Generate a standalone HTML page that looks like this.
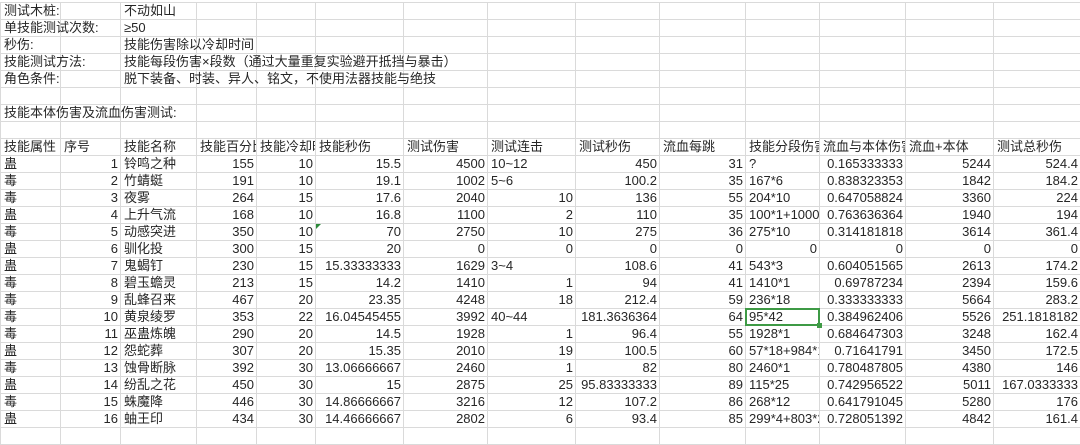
<!DOCTYPE html>
<html><head><meta charset="utf-8"><style>
html,body{margin:0;padding:0;background:#fff;width:1080px;height:428px;overflow:hidden}
table{position:absolute;left:0;top:2px;width:1080px;border-collapse:collapse;table-layout:fixed;font-family:"Liberation Sans","Noto Sans CJK SC",sans-serif;font-size:13px;color:#262626}
td{border:1px solid #dadada;height:16px;padding:0 2px 0 3px;white-space:nowrap;overflow:hidden;line-height:16px;max-width:0}
td.v{overflow:visible}
.r{text-align:right}
.sel{position:relative;overflow:visible}
.sel:after{content:"";position:absolute;left:-1px;top:-1px;right:-1px;bottom:-1px;border:2px solid #3e9a45}
.sel:before{content:"";position:absolute;right:-3px;bottom:-3px;width:5px;height:5px;background:#3e9a45;z-index:2}
.tri{position:relative;overflow:visible}
.tri:after{content:"";position:absolute;left:0;top:0;border-top:5px solid #2c8a3a;border-right:5px solid transparent}
</style></head><body>
<table>
<colgroup><col style="width:60px"><col style="width:60px"><col style="width:76px"><col style="width:60px"><col style="width:59px"><col style="width:88px"><col style="width:84px"><col style="width:88px"><col style="width:84px"><col style="width:86px"><col style="width:74px"><col style="width:86px"><col style="width:88px"><col style="width:87px"></colgroup>
<tr><td class="v">测试木桩:</td><td></td><td class="v">不动如山</td><td></td><td></td><td></td><td></td><td></td><td></td><td></td><td></td><td></td><td></td><td></td></tr>
<tr><td class="v">单技能测试次数:</td><td></td><td class="v">≥50</td><td></td><td></td><td></td><td></td><td></td><td></td><td></td><td></td><td></td><td></td><td></td></tr>
<tr><td class="v">秒伤:</td><td></td><td class="v">技能伤害除以冷却时间</td><td></td><td></td><td></td><td></td><td></td><td></td><td></td><td></td><td></td><td></td><td></td></tr>
<tr><td class="v">技能测试方法:</td><td></td><td class="v">技能每段伤害×段数（通过大量重复实验避开抵挡与暴击）</td><td></td><td></td><td></td><td></td><td></td><td></td><td></td><td></td><td></td><td></td><td></td></tr>
<tr><td class="v">角色条件:</td><td></td><td class="v">脱下装备、时装、异人、铭文，不使用法器技能与绝技</td><td></td><td></td><td></td><td></td><td></td><td></td><td></td><td></td><td></td><td></td><td></td></tr>
<tr><td></td><td></td><td></td><td></td><td></td><td></td><td></td><td></td><td></td><td></td><td></td><td></td><td></td><td></td></tr>
<tr><td class="v">技能本体伤害及流血伤害测试:</td><td></td><td></td><td></td><td></td><td></td><td></td><td></td><td></td><td></td><td></td><td></td><td></td><td></td></tr>
<tr><td></td><td></td><td></td><td></td><td></td><td></td><td></td><td></td><td></td><td></td><td></td><td></td><td></td><td></td></tr>
<tr><td>技能属性</td><td>序号</td><td>技能名称</td><td>技能百分比</td><td>技能冷却时间</td><td>技能秒伤</td><td>测试伤害</td><td>测试连击</td><td>测试秒伤</td><td>流血每跳</td><td>技能分段伤害</td><td>流血与本体伤害比</td><td>流血+本体</td><td>测试总秒伤</td></tr>
<tr><td>蛊</td><td class="r">1</td><td>铃鸣之种</td><td class="r">155</td><td class="r">10</td><td class="r">15.5</td><td class="r">4500</td><td>10~12</td><td class="r">450</td><td class="r">31</td><td>?</td><td class="r">0.165333333</td><td class="r">5244</td><td class="r">524.4</td></tr>
<tr><td>毒</td><td class="r">2</td><td>竹蜻蜓</td><td class="r">191</td><td class="r">10</td><td class="r">19.1</td><td class="r">1002</td><td>5~6</td><td class="r">100.2</td><td class="r">35</td><td>167*6</td><td class="r">0.838323353</td><td class="r">1842</td><td class="r">184.2</td></tr>
<tr><td>毒</td><td class="r">3</td><td>夜雾</td><td class="r">264</td><td class="r">15</td><td class="r">17.6</td><td class="r">2040</td><td class="r">10</td><td class="r">136</td><td class="r">55</td><td>204*10</td><td class="r">0.647058824</td><td class="r">3360</td><td class="r">224</td></tr>
<tr><td>蛊</td><td class="r">4</td><td>上升气流</td><td class="r">168</td><td class="r">10</td><td class="r">16.8</td><td class="r">1100</td><td class="r">2</td><td class="r">110</td><td class="r">35</td><td>100*1+1000*</td><td class="r">0.763636364</td><td class="r">1940</td><td class="r">194</td></tr>
<tr><td>毒</td><td class="r">5</td><td>动感突进</td><td class="r">350</td><td class="r">10</td><td class="r tri">70</td><td class="r">2750</td><td class="r">10</td><td class="r">275</td><td class="r">36</td><td>275*10</td><td class="r">0.314181818</td><td class="r">3614</td><td class="r">361.4</td></tr>
<tr><td>蛊</td><td class="r">6</td><td>驯化投</td><td class="r">300</td><td class="r">15</td><td class="r">20</td><td class="r">0</td><td class="r">0</td><td class="r">0</td><td class="r">0</td><td class="r">0</td><td class="r">0</td><td class="r">0</td><td class="r">0</td></tr>
<tr><td>蛊</td><td class="r">7</td><td>鬼蝎钉</td><td class="r">230</td><td class="r">15</td><td class="r">15.33333333</td><td class="r">1629</td><td>3~4</td><td class="r">108.6</td><td class="r">41</td><td>543*3</td><td class="r">0.604051565</td><td class="r">2613</td><td class="r">174.2</td></tr>
<tr><td>毒</td><td class="r">8</td><td>碧玉蟾灵</td><td class="r">213</td><td class="r">15</td><td class="r">14.2</td><td class="r">1410</td><td class="r">1</td><td class="r">94</td><td class="r">41</td><td>1410*1</td><td class="r">0.69787234</td><td class="r">2394</td><td class="r">159.6</td></tr>
<tr><td>毒</td><td class="r">9</td><td>乱蜂召来</td><td class="r">467</td><td class="r">20</td><td class="r">23.35</td><td class="r">4248</td><td class="r">18</td><td class="r">212.4</td><td class="r">59</td><td>236*18</td><td class="r">0.333333333</td><td class="r">5664</td><td class="r">283.2</td></tr>
<tr><td>毒</td><td class="r">10</td><td>黄泉绫罗</td><td class="r">353</td><td class="r">22</td><td class="r">16.04545455</td><td class="r">3992</td><td>40~44</td><td class="r">181.3636364</td><td class="r">64</td><td class="sel">95*42</td><td class="r">0.384962406</td><td class="r">5526</td><td class="r">251.1818182</td></tr>
<tr><td>毒</td><td class="r">11</td><td>巫蛊炼魄</td><td class="r">290</td><td class="r">20</td><td class="r">14.5</td><td class="r">1928</td><td class="r">1</td><td class="r">96.4</td><td class="r">55</td><td>1928*1</td><td class="r">0.684647303</td><td class="r">3248</td><td class="r">162.4</td></tr>
<tr><td>蛊</td><td class="r">12</td><td>怨蛇葬</td><td class="r">307</td><td class="r">20</td><td class="r">15.35</td><td class="r">2010</td><td class="r">19</td><td class="r">100.5</td><td class="r">60</td><td>57*18+984*1</td><td class="r">0.71641791</td><td class="r">3450</td><td class="r">172.5</td></tr>
<tr><td>毒</td><td class="r">13</td><td>蚀骨断脉</td><td class="r">392</td><td class="r">30</td><td class="r">13.06666667</td><td class="r">2460</td><td class="r">1</td><td class="r">82</td><td class="r">80</td><td>2460*1</td><td class="r">0.780487805</td><td class="r">4380</td><td class="r">146</td></tr>
<tr><td>蛊</td><td class="r">14</td><td>纷乱之花</td><td class="r">450</td><td class="r">30</td><td class="r">15</td><td class="r">2875</td><td class="r">25</td><td class="r">95.83333333</td><td class="r">89</td><td>115*25</td><td class="r">0.742956522</td><td class="r">5011</td><td class="r">167.0333333</td></tr>
<tr><td>毒</td><td class="r">15</td><td>蛛魔降</td><td class="r">446</td><td class="r">30</td><td class="r">14.86666667</td><td class="r">3216</td><td class="r">12</td><td class="r">107.2</td><td class="r">86</td><td>268*12</td><td class="r">0.641791045</td><td class="r">5280</td><td class="r">176</td></tr>
<tr><td>蛊</td><td class="r">16</td><td>蚰王印</td><td class="r">434</td><td class="r">30</td><td class="r">14.46666667</td><td class="r">2802</td><td class="r">6</td><td class="r">93.4</td><td class="r">85</td><td>299*4+803*2</td><td class="r">0.728051392</td><td class="r">4842</td><td class="r">161.4</td></tr>
<tr><td></td><td></td><td></td><td></td><td></td><td></td><td></td><td></td><td></td><td></td><td></td><td></td><td></td><td></td></tr>
</table>
</body></html>
